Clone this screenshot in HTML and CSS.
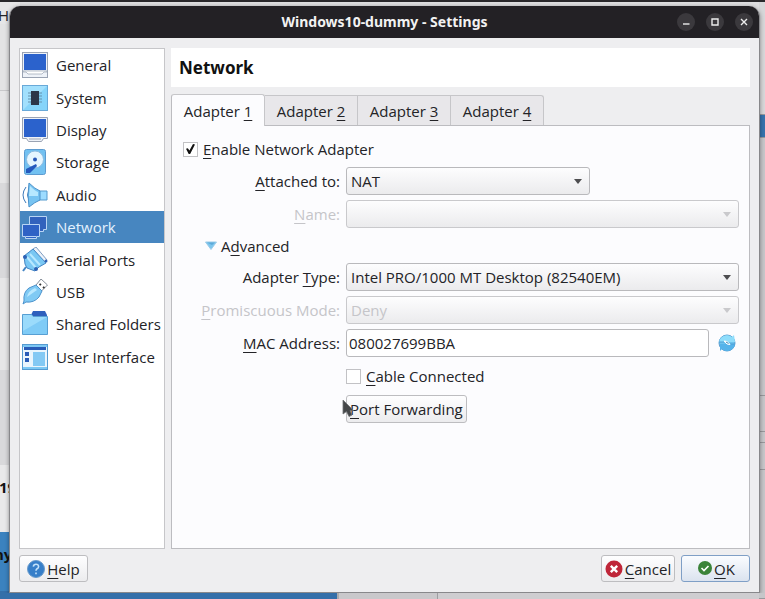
FILE: index.html
```html
<!DOCTYPE html>
<html lang="en">
<head>
<meta charset="utf-8">
<title>Windows10-dummy - Settings</title>
<link rel="stylesheet" href="styles.css">
</head>
<body>
<div class="backdrop" aria-hidden="true">
  <div class="back-left">
    <div class="back-menu"><u>H</u>elp</div>
    <div class="back-tools"></div>
    <div class="back-light"></div>
    <div class="back-dim"></div>
    <div class="back-light"></div>
    <div class="back-dim"></div>
    <div class="back-row">19</div>
    <div class="back-row back-selected">ny</div>
  </div>
  <div class="back-bottom"><span class="back-blue"></span><span class="back-cell"></span><span class="back-rest"></span></div>
  <div class="back-right">
    <div class="r-top"></div><div class="r-blue"></div><div class="r-mid"></div><div class="r-a"></div><div class="r-b"></div><div class="r-c"></div><div class="r-rest"></div>
  </div>
</div>

<main class="dialog">
  <header class="titlebar">
    <h1>Windows10-dummy - Settings</h1>
    <div class="window-buttons">
      <button type="button" aria-label="Minimize"><svg viewBox="0 0 18 18"><path d="M6 11h6.500"/></svg></button>
      <button type="button" aria-label="Maximize"><svg viewBox="0 0 18 18"><path d="M6 6h6v6H6z"/></svg></button>
      <button type="button" aria-label="Close"><svg viewBox="0 0 18 18"><path d="M6 6l6 6M12 6l-6 6"/></svg></button>
    </div>
  </header>

  <div class="content">
    <nav class="sections">
      <a href="#general"><svg viewBox="0 0 26 26"><rect x=".5" y=".5" width="25" height="25" fill="#eef2f8" stroke="#9aa3b3"/><rect x="2" y="2" width="22" height="16" fill="#2b62cc"/><path d="M1 19h24v1h-3l-2 2H6l-2-2H1z" fill="#fff" stroke="#9aa3b3" stroke-width=".7"/></svg>General</a>
      <a href="#system"><svg viewBox="0 0 26 26"><rect x=".5" y=".5" width="25" height="25" fill="#86d4fa" stroke="#69a9d8"/><path d="M1 1h24L1 25z" fill="#aee6fd" opacity=".7"/><path d="M6 8h14M6 11h14M6 14h14M6 17h14" stroke="#6591ad"/><rect x="9" y="6" width="8" height="14" fill="#2c3548"/></svg>System</a>
      <a href="#display"><svg viewBox="0 0 26 26"><path d="M.5.5h25v21h-4l-2 3h-13l-2-3h-4z" fill="#eef2f8" stroke="#9aa3b3"/><rect x="2" y="2" width="22" height="18" fill="#2b62cc"/><path d="M7 22h12" stroke="#9aa3b3"/></svg>Display</a>
      <a href="#storage"><svg viewBox="0 0 26 26"><rect x="2.500" y=".5" width="21" height="25" rx="2" fill="#72c1f1" stroke="#5c9bd0"/><circle cx="13" cy="10.500" r="8.500" fill="#e6f6ff" stroke="#8dbce0"/><circle cx="13" cy="10.500" r="2" fill="#2857b8"/><path d="M4 20l10-5 1 2-7 7H4z" fill="#2559bd"/></svg>Storage</a>
      <a href="#audio"><svg viewBox="0 0 26 26"><path d="M4 5q-6 8 0 16M7 8q-3 5 0 10" fill="none" stroke="#3c79ba"/><path d="M16 9h9v9h-9z" fill="#9ddcff" stroke="#579bce"/><path d="M7 1q6 6 11 8v9q-5 2-11 7-2-12 0-24z" fill="#77c4f2" stroke="#4c91c9"/><path d="M8 4q5 5 8 6v4H7z" fill="#b7e8ff"/></svg>Audio</a>
      <a href="#network" class="current" aria-current="page"><svg viewBox="0 0 26 26"><path d="M7.500 2.500h17v13h-3v2h-10v-2h-4z" fill="#3262bd" stroke="#b8d4f4"/><path d="M.5 10.500h17v12h-3v2h-11v-2h-3z" fill="#2f62c5" stroke="#b8d4f4"/><path d="M4 22.500h10" stroke="#b8d4f4"/></svg>Network</a>
      <a href="#serial-ports"><svg viewBox="0 0 26 26"><path d="M11 2l3-2 11 13-3 3z" fill="#eef3fa" stroke="#7f9dc2"/><path d="M2 9l9-7 13 14-7 4-4 4-8-3-2-4z" fill="#79c7f3" stroke="#4586c4"/><path d="M8 7l10 11M5 10l9 11" stroke="#b7e8ff" stroke-width="2"/><path d="M4 20l-3 4" stroke="#4586c4" stroke-width="2"/><circle cx="3" cy="10" r="2" fill="#2e62b5"/><circle cx="14" cy="22" r="2" fill="#2e62b5"/><circle cx="24" cy="14" r="1.500" fill="#2e62b5"/></svg>Serial Ports</a>
      <a href="#usb"><svg viewBox="0 0 26 26"><path d="M14 6l5-6 6.500 6-6 6z" fill="#fff" stroke="#858d99"/><path d="M17.500 5l1.500 1M21 8l1.500 1" stroke="#333" stroke-width="2"/><path d="M2 22q-1-9 5-13l7-3 6 6-3 6q-5 6-13 5l-3 2z" fill="#80caf4" stroke="#4d93cd"/><path d="M5 18q1-6 8-9l2 2z" fill="#b9e8ff"/></svg>USB</a>
      <a href="#shared-folders"><svg viewBox="0 0 26 26"><path d="M9 4l2-4h12l2 4v3H9z" fill="#2e60bd"/><path d="M.5 3.500h9l2 2h14v18H.5z" fill="#7fcbf6" stroke="#579fd3"/><path d="M1 4h8l2 2h14L1 20z" fill="#a7e1fd" opacity=".7"/></svg>Shared Folders</a>
      <a href="#user-interface"><svg viewBox="0 0 26 26"><rect x=".5" y=".5" width="25" height="25" fill="#e9f5fd" stroke="#559bd1"/><path d="M1 1h24v2H1z" fill="#7cc8f4"/><path d="M2 3h22v3H2z" fill="#285bb7"/><path d="M3 8h4v4H3zM3 14h4v4H3z" fill="#285bb7"/><path d="M11 8h12v14H11z" fill="#83c9f4"/><path d="M1 24h24" stroke="#7cc8f4" stroke-width="2"/></svg>User Interface</a>
    </nav>

    <section class="page">
      <h2>Network</h2>
      <div class="tabs" role="tablist">
        <button type="button" role="tab" aria-selected="true">Adapter <u>1</u></button>
        <button type="button" role="tab" aria-selected="false">Adapter <u>2</u></button>
        <button type="button" role="tab" aria-selected="false">Adapter <u>3</u></button>
        <button type="button" role="tab" aria-selected="false">Adapter <u>4</u></button>
      </div>
      <form class="pane">
        <div class="check-row enable">
          <input type="checkbox" id="enable" checked><label for="enable"><u>E</u>nable Network Adapter</label>
        </div>
        <div class="fields">
          <label for="attached"><u>A</u>ttached to:</label>
          <div class="combo narrow"><select id="attached"><option>NAT</option></select><svg viewBox="0 0 8 5"><path d="M0 0h8L4 5z"/></svg></div>

          <label for="name" class="off"><u>N</u>ame:</label>
          <div class="combo"><select id="name" disabled><option></option></select><svg viewBox="0 0 8 5"><path d="M0 0h8L4 5z"/></svg></div>

          <button type="button" class="advanced" aria-expanded="true"><svg viewBox="0 0 12 9"><path d="M.5 1h11L6 8.500z" fill="#7cc5ed" stroke="#9ccbe8"/><path d="M2 1.500h8L7 4z" fill="#5ca9d8"/></svg><span>A<u>d</u>vanced</span></button>

          <label for="type">Adapter <u>T</u>ype:</label>
          <div class="combo"><select id="type"><option>Intel PRO/1000 MT Desktop (82540EM)</option></select><svg viewBox="0 0 8 5"><path d="M0 0h8L4 5z"/></svg></div>

          <label for="mode" class="off"><u>P</u>romiscuous Mode:</label>
          <div class="combo"><select id="mode" disabled><option>Deny</option></select><svg viewBox="0 0 8 5"><path d="M0 0h8L4 5z"/></svg></div>

          <label for="mac"><u>M</u>AC Address:</label>
          <div class="mac">
            <input type="text" id="mac" value="080027699BBA">
            <button type="button" aria-label="Generate new MAC address"><svg viewBox="0 0 18 18"><circle cx="9" cy="9" r="8" fill="#6cc3ee" stroke="#5c9fd2"/><path d="M1 9a8 8 0 0 1 13-6l2-2 1 7H1z" fill="#8eddfb"/><path d="M17 10a8 8 0 0 1-13 5l-2 2v-7z" fill="#55b3ea"/><path d="M1 8h5M12 10h5" stroke="#4f9ed4"/><path d="M6 7l3 .5 3 3-3-.5z" fill="#fff" stroke="#fff"/><path d="M8 8l2.500 1.500" stroke="#4380ae"/></svg></button>
          </div>

          <div class="check-row in-field">
            <input type="checkbox" id="cable"><label for="cable"><u>C</u>able Connected</label>
          </div>

          <div class="in-field forward">
            <button type="button" class="button"><span><u>P</u>ort Forwarding</span></button>
            <svg class="pointer" viewBox="0 0 12 19" aria-hidden="true"><path d="M1 1v14l3.500-2.500L7 17.500l3-1.500-2-4.500h3.500z" fill="#444648" stroke="#6f7173" stroke-width=".8"/></svg>
          </div>
        </div>
      </form>
    </section>
  </div>

  <footer class="actions">
    <button type="button" class="button help"><svg viewBox="0 0 18 18"><circle cx="9" cy="9" r="8.500" fill="#377fc9" stroke="#6b9ccc"/><path d="M6.300 6.700q.3-2.500 2.700-2.500t2.600 2.200q0 1.400-1.500 2.300Q9 9.500 9 10.800M9 12.500v1.700" fill="none" stroke="#c4e2fa" stroke-width="1.600"/></svg><span><u>H</u>elp</span></button>
    <button type="button" class="button cancel"><svg viewBox="0 0 18 18"><circle cx="9" cy="9" r="8.500" fill="#bf2639"/><path d="M5.800 5.800l6.400 6.400M12.200 5.800l-6.400 6.400" stroke="#fff" stroke-width="2.400"/></svg><span><u>C</u>ancel</span></button>
    <button type="button" class="button ok"><svg viewBox="0 0 18 18"><circle cx="9" cy="8" r="7" fill="#3a8339"/><path d="M5.500 8l2.500 2.500L12.500 6" fill="none" stroke="#fff" stroke-width="1.600"/></svg><span><u>O</u>K</span></button>
  </footer>
</main>
</body>
</html>
```
FILE: styles.css
```css
* { box-sizing: border-box; }

body {
  margin: 0;
  font: 15px/20px "Open Sans", "Noto Sans", sans-serif;
  color: #232327;
  background: #dedee0;
}

button, input, select { font: inherit; color: inherit; margin: 0; }
button { padding: 0; }
svg { display: block; flex: none; }
u { text-decoration: underline 1px; text-underline-offset: 3px; text-decoration-skip-ink: none; }
h1, h2 { font-family: "Noto Sans", "Open Sans", sans-serif; }

/* Manager window behind the dialog */
.backdrop {
  position: absolute;
  inset: 0;
  overflow: hidden;
  border-top: 2px solid #29282b;
  background: #dedee0;
}
.back-left { display: flex; flex-direction: column; width: 20px; height: 100%; }
.back-menu { height: 22px; padding-top: 4px; line-height: 18px; text-indent: -2px; background: #e6e6e7; }
.back-tools { height: 67px; background: #e3e3e4; border-bottom: 1px solid #c8c8ca; }
.back-light { height: 92px; background: #e6e6e7; }
.back-dim { flex: 1; background: #d9d9db; }
.back-row { flex: 0 0 67px; padding-top: 12px; font-weight: 700; color: #111; background: #e9e9ea; text-indent: -1px; }
.back-selected { background: #3b82bf; text-indent: -6px; }
.back-bottom { position: absolute; left: 0; right: 0; bottom: 0; height: 8px; display: flex; }
.back-blue { flex: 0 0 337px; background: #346fa9; }
.back-cell { flex: 0 0 101px; background: #c9c8cb; border-left: 2px solid #aaabad; border-right: 1px solid #9e9ea1; }
.back-rest { flex: 1; background: #cecdd0; }
.back-right { position: absolute; top: 0; right: 0; bottom: 0; width: 6px; display: flex; flex-direction: column; background: #c6c6c9; }
.back-right div { border-bottom: 1px solid #98989c; }
.r-top { flex: 0 0 113px; background: #d7d7d9; }
.r-blue { flex: 0 0 23px; background: #3673ad; }
.r-mid { flex: 0 0 258px; }
.r-a { flex: 0 0 36px; }
.r-b { flex: 0 0 11px; }
.r-c { flex: 0 0 27px; }
.r-rest { flex: 1; }

/* Dialog */
.dialog {
  position: relative;
  display: flex;
  flex-direction: column;
  min-height: calc(100vh - 12px);
  margin: 6px 5px 0 9px;
  border: 1px solid #88888b;
  border-top: 0;
  border-radius: 11px 11px 0 0;
  background: #eeeef0;
  box-shadow: 0 1px 4px #0006;
}
.titlebar {
  display: grid;
  grid-template-columns: 1fr auto 1fr;
  align-items: center;
  height: 32px;
  padding: 0 6px;
  color: #f2f2f2;
  background: #232125;
  border-radius: 10px 10px 0 0;
}
.titlebar h1 { grid-column: 2; margin: 0; font-size: 14px; line-height: 20px; }
.window-buttons { display: flex; justify-content: flex-end; gap: 11px; }
.window-buttons button { width: 18px; height: 18px; border: 0; border-radius: 50%; background: #3b393d; }
.window-buttons svg { width: 18px; height: 18px; fill: none; stroke: #ededed; stroke-width: 1.4; }

.content { flex: 1; display: flex; gap: 6px; padding: 10px 9px 0; }
.sections {
  flex: 0 0 146px;
  display: grid;
  grid-template-rows: repeat(10, 1fr);
  background: #fff;
  border: 1px solid #c6c6c9;
  padding-bottom: 175px;
}
.sections a {
  display: flex;
  align-items: center;
  gap: 8px;
  padding-left: 2px;
  color: inherit;
  text-decoration: none;
  white-space: nowrap;
}
.sections svg { width: 26px; height: 26px; }
.sections .current { color: #e4f2ff; background: #4786c0; }

.page { flex: 1; min-width: 0; display: flex; flex-direction: column; }
.page h2 { margin: 0; padding: 10px 8px 9px; font-size: 17px; line-height: 20px; color: #111; background: #fff; }

.tabs { display: flex; align-items: flex-end; height: 38px; }
.tabs button {
  width: 93px;
  height: 30px;
  border: 1px solid #c6c6c9;
  border-left: 0;
  border-bottom: 0;
  background: #e8e7ea;
}
.tabs button:last-child { border-radius: 0 3px 0 0; }
.tabs [aria-selected="true"] {
  position: relative;
  width: 94px;
  height: 32px;
  border-left: 1px solid #bcbcc0;
  border-radius: 3px 3px 0 0;
  background: #fcfcfe;
  margin-bottom: -1px;
}

.pane { flex: 1; padding: 13px 10px 0 11px; border: 1px solid #bcbcc0; background: #fcfcfe; }
.check-row { display: flex; align-items: center; gap: 5px; }
.enable { height: 20px; margin-bottom: 8px; }
input[type="checkbox"] {
  appearance: none;
  display: grid;
  place-items: center;
  width: 15px;
  height: 15px;
  border: 1px solid #c2c2c5;
  background: #fff;
}
input[type="checkbox"]:checked::after {
  content: "";
  width: 9px;
  height: 10px;
  background: #111;
  clip-path: polygon(0 48%, 20% 42%, 38% 66%, 78% 0, 100% 4%, 46% 100%, 30% 100%);
}

.fields {
  display: grid;
  grid-template-columns: 157px minmax(0, 1fr);
  grid-template-rows: 28px 28px 25px;
  grid-auto-rows: 28px;
  gap: 5px 6px;
  align-items: center;
}
.fields > label { text-align: right; white-space: nowrap; }
.off { color: #c5c5c9; }
.in-field { grid-column: 2; }

.combo { position: relative; }
.narrow { width: 62%; }
.combo select {
  appearance: none;
  display: block;
  width: 100%;
  height: 28px;
  padding: 0 24px 0 4px;
  border: 1px solid #b9b9bc;
  border-radius: 3px;
  background: linear-gradient(#fdfdfe, #ebebed);
}
.combo select:disabled { color: #c5c5c9; border-color: #c9c9cc; opacity: 1; }
.combo svg { position: absolute; right: 8px; top: 12px; width: 8px; height: 5px; fill: #4d4d50; pointer-events: none; }
.combo select:disabled + svg { fill: #c9c9cc; }

.advanced {
  grid-column: 1 / -1;
  justify-self: start;
  display: flex;
  align-items: center;
  gap: 4px;
  margin-left: 22px;
  border: 0;
  background: none;
}
.advanced svg { width: 12px; height: 9px; }

.mac { display: flex; align-items: center; gap: 9px; }
.mac input { flex: 1; min-width: 0; height: 28px; padding: 0 2px; border: 1px solid #b9b9bc; border-radius: 3px; background: #fff; }
.mac button { width: 18px; height: 18px; margin-right: 3px; border: 0; background: none; }
.mac svg { width: 18px; height: 18px; }

.button {
  display: flex;
  align-items: center;
  justify-content: center;
  gap: 2px;
  height: 28px;
  padding: 0 3px;
  border: 1px solid #bdbdc0;
  border-radius: 3px;
  background: linear-gradient(#fefeff, #ececee);
}
.button svg { width: 18px; height: 18px; }
.forward { position: relative; }
.pointer { position: absolute; left: -4px; top: 4px; width: 12px; height: 19px; }

.actions { display: flex; gap: 6px; padding: 6px 9px 10px; }
.actions .button { height: 27px; }
.help { width: 69px; margin-right: auto; }
.cancel { width: 74px; }
.ok { width: 69px; }
.actions .ok { gap: 0; border-color: #7f9fc6; background: linear-gradient(#fafcff, #dbe3ef); }
```
